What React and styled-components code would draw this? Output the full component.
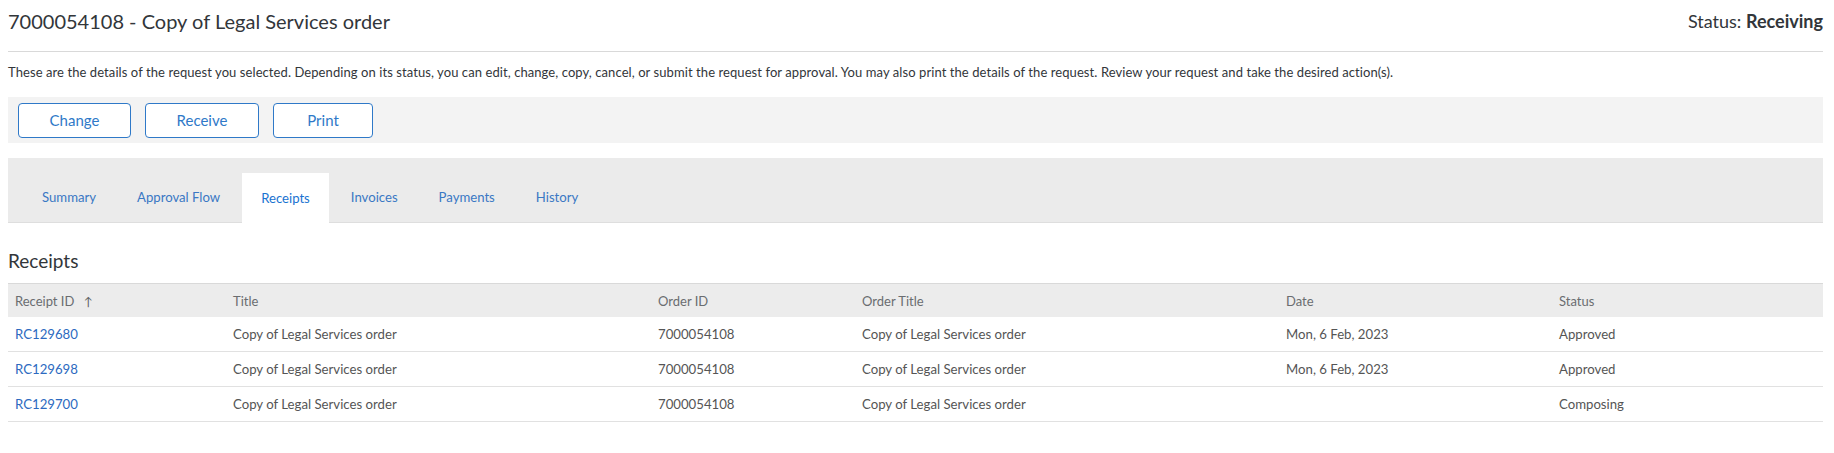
import styled, { createGlobalStyle } from 'styled-components'

const GlobalStyle = createGlobalStyle`
  body {
    margin: 0;
    background: #fff;
    font-family: Lato, "Open Sans", "Liberation Sans", sans-serif;
    color: #32363a;
  }
`

const tabs = ['Summary', 'Approval Flow', 'Receipts', 'Invoices', 'Payments', 'History']

const rows = [
  { id: 'RC129680', title: 'Copy of Legal Services order', order: '7000054108', orderTitle: 'Copy of Legal Services order', date: 'Mon, 6 Feb, 2023', status: 'Approved' },
  { id: 'RC129698', title: 'Copy of Legal Services order', order: '7000054108', orderTitle: 'Copy of Legal Services order', date: 'Mon, 6 Feb, 2023', status: 'Approved' },
  { id: 'RC129700', title: 'Copy of Legal Services order', order: '7000054108', orderTitle: 'Copy of Legal Services order', date: '', status: 'Composing' },
]

const App = () => {
  return (
    <Page>
      <GlobalStyle />
      <Header>
        <Title>7000054108 - Copy of Legal Services order</Title>
        <StatusText>Status: <b>Receiving</b></StatusText>
      </Header>
      <Description>
        These are the details of the request you selected. Depending on its status, you can edit, change, copy, cancel, or submit the request for approval. You may also print the details of the request. Review your request and take the desired action(s).
      </Description>
      <Toolbar>
        <Button $w={113}>Change</Button>
        <Button $w={114}>Receive</Button>
        <Button $w={100}>Print</Button>
      </Toolbar>
      <TabBar>
        {tabs.map(t => (
          <Tab key={t} $active={t === 'Receipts'}>{t}</Tab>
        ))}
      </TabBar>
      <SectionTitle>Receipts</SectionTitle>
      <Table>
        <HeadRow>
          <HeadCell>Receipt ID <SortArrow>↑</SortArrow></HeadCell>
          <HeadCell>Title</HeadCell>
          <HeadCell>Order ID</HeadCell>
          <HeadCell>Order Title</HeadCell>
          <HeadCell>Date</HeadCell>
          <HeadCell>Status</HeadCell>
        </HeadRow>
        {rows.map(r => (
          <Row key={r.id}>
            <Cell><Link>{r.id}</Link></Cell>
            <Cell>{r.title}</Cell>
            <Cell>{r.order}</Cell>
            <Cell>{r.orderTitle}</Cell>
            <Cell>{r.date}</Cell>
            <Cell>{r.status}</Cell>
          </Row>
        ))}
      </Table>
    </Page>
  )
}
export default App

const Page = styled.div`
  padding: 0 11px 0 8px;
`

const Header = styled.div`
  display: flex;
  justify-content: space-between;
  align-items: center;
  height: 52px;
  border-bottom: 1px solid #d9d9d9;
  padding-bottom: 10px;
  box-sizing: border-box;
`

const Title = styled.h1`
  margin: 0;
  font-size: 20px;
  font-weight: 400;
  color: #32363a;
`

const StatusText = styled.div`
  font-size: 18px;
  color: #32363a;
  b {
    font-weight: 700;
  }
`

const Description = styled.p`
  margin: 0;
  padding: 12px 0 0;
  height: 45px;
  box-sizing: border-box;
  font-size: 13px;
  letter-spacing: 0.08px;
  color: #32363a;
`

const Toolbar = styled.div`
  display: flex;
  align-items: center;
  gap: 14px;
  height: 46px;
  padding: 0 10px;
  background: #f3f3f3;
`

const Button = styled.button`
  width: ${p => p.$w}px;
  height: 35px;
  background: #fff;
  border: 1px solid #2f79c8;
  border-radius: 4px;
  color: #2f79c8;
  font-family: inherit;
  font-size: 15px;
  cursor: pointer;
`

const TabBar = styled.div`
  display: flex;
  align-items: flex-end;
  gap: 3px;
  margin-top: 15px;
  height: 65px;
  padding-left: 15px;
  background: #ebebeb;
  border-bottom: 1px solid #dedede;
  box-sizing: border-box;
`

const Tab = styled.div`
  height: 50px;
  display: flex;
  align-items: center;
  padding: 0 19px;
  font-size: 13.15px;
  color: ${p => (p.$active ? '#1a73d1' : '#3a78c4')};
  background: ${p => (p.$active ? '#fff' : 'transparent')};
  margin-bottom: ${p => (p.$active ? '-1px' : '0')};
`

const SectionTitle = styled.h2`
  margin: 0;
  height: 60px;
  padding-top: 26px;
  box-sizing: border-box;
  font-size: 19px;
  line-height: 24px;
  font-weight: 400;
  color: #32363a;
`

const Table = styled.div`
  border-top: 1px solid #d9d9d9;
`

const grid = `
  display: grid;
  grid-template-columns: 218px 425px 204px 424px 273px 1fr;
`

const HeadRow = styled.div`
  ${grid}
  height: 33px;
  background: #ececec;
  align-items: center;
`

const Row = styled.div`
  ${grid}
  height: 35px;
  align-items: center;
  border-bottom: 1px solid #e1e1e1;
  box-sizing: border-box;
`

const HeadCell = styled.div`
  padding-left: 7px;
  font-size: 13px;
  color: #6a6d70;
`

const SortArrow = styled.span`
  margin-left: 6px;
  color: #5c5f62;
  font-size: 12px;
`

const Cell = styled.div`
  padding-left: 7px;
  font-size: 13.2px;
  color: #555;
`

const Link = styled.span`
  color: #2c6ac0;
`
